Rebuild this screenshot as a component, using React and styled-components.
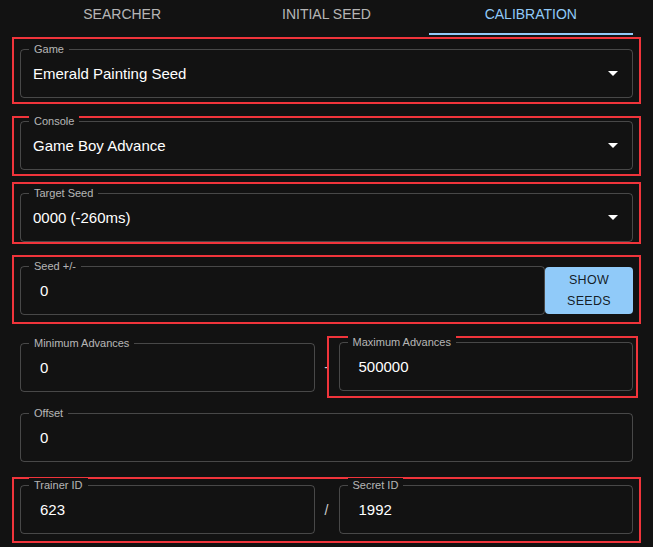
import React from 'react';
import styled, { createGlobalStyle } from 'styled-components';

const Global = createGlobalStyle`
  body { margin: 0; background: #121212; font-family: "Liberation Sans", Arial, sans-serif; color: #fff; }
`;

const Page = styled.div`
  width: 653px;
  height: 547px;
  overflow: hidden;
  padding: 0 20px;
  box-sizing: border-box;
`;

const Tabs = styled.div`
  display: flex;
  height: 35px;
`;

const Tab = styled.div`
  flex: 1;
  display: flex;
  align-items: center;
  justify-content: center;
  font-size: 14px;
  padding-bottom: 6px;
  box-sizing: border-box;
  color: ${p => (p.$active ? '#90caf9' : 'rgba(255,255,255,0.7)')};
  border-bottom: 2px solid ${p => (p.$active ? '#90caf9' : 'transparent')};
`;

const Marked = styled.div`
  margin: ${p => p.$mt}px -8px 0;
  padding: ${p => p.$pt}px 6px ${p => p.$pb}px;
  border: 2px solid #f0343b;
  display: flex;
  align-items: ${p => p.$align || 'stretch'};
`;

const Plain = styled.div`
  margin-top: ${p => p.$mt}px;
  display: flex;
  align-items: center;
`;

const Field = styled.div`
  position: relative;
  flex: 1;
  height: 49px;
  border: 1px solid rgba(255,255,255,0.23);
  border-radius: 4px;
  box-sizing: border-box;
  display: flex;
  align-items: center;
  padding: 0 ${p => (p.$select ? 12 : 19)}px;
  font-size: 15px;
`;

const Label = styled.span`
  position: absolute;
  top: -8px;
  left: 8px;
  padding: 0 5px;
  background: #121212;
  font-size: 11px;
  color: rgba(255,255,255,0.7);
  line-height: 14px;
`;

const Value = styled.span`
  flex: 1;
`;

const Caret = styled.span`
  width: 0;
  height: 0;
  border-left: 5px solid transparent;
  border-right: 5px solid transparent;
  border-top: 5px solid #fff;
  margin-right: 2px;
`;

const Button = styled.div`
  width: 88px;
  height: 47px;
  background: #90caf9;
  border-radius: 4px;
  color: rgba(0,0,0,0.87);
  font-size: 12.5px;
  text-align: center;
  line-height: 21px;
  display: flex;
  align-items: center;
  justify-content: center;
  letter-spacing: 0.3px;
`;

const Sep = styled.span`
  width: 24px;
  text-align: center;
  font-size: 14px;
  color: rgba(255,255,255,0.8);
`;

const Half = styled.div`
  flex: 1;
  display: flex;
`;

const MarkedHalf = styled.div`
  flex: 1;
  display: flex;
  margin: 0 -5px 0 -12px;
  padding: 4px 3px 5px 10px;
  border: 2px solid #f0343b;
`;

const Select = ({ label, value }) => (
  <Field $select>
    <Label>{label}</Label>
    <Value>{value}</Value>
    <Caret />
  </Field>
);

const Input = ({ label, value }) => (
  <Field>
    <Label>{label}</Label>
    <Value>{value}</Value>
  </Field>
);

export default function App() {
  return (
    <Page>
      <Global />
      <Tabs>
        <Tab>SEARCHER</Tab>
        <Tab>INITIAL SEED</Tab>
        <Tab $active>CALIBRATION</Tab>
      </Tabs>
      <Marked $mt={2} $pt={10} $pb={4}>
        <Select label="Game" value="Emerald Painting Seed" />
      </Marked>
      <Marked $mt={12} $pt={3} $pb={4}>
        <Select label="Console" value="Game Boy Advance" />
      </Marked>
      <Marked $mt={6} $pt={9} $pb={0}>
        <Select label="Target Seed" value="0000 (-260ms)" />
      </Marked>
      <Marked $mt={11} $pt={9} $pb={7} $align="center">
        <Input label="Seed +/-" value="0" />
        <Button>SHOW<br />SEEDS</Button>
      </Marked>
      <Plain $mt={12}>
        <Half><Input label="Minimum Advances" value="0" /></Half>
        <Sep>-</Sep>
        <MarkedHalf><Input label="Maximum Advances" value="500000" /></MarkedHalf>
      </Plain>
      <Plain $mt={15}>
        <Input label="Offset" value="0" />
      </Plain>
      <Marked $mt={15} $pt={6} $pb={7} $align="center">
        <Input label="Trainer ID" value="623" />
        <Sep>/</Sep>
        <Input label="Secret ID" value="1992" />
      </Marked>
    </Page>
  );
}
